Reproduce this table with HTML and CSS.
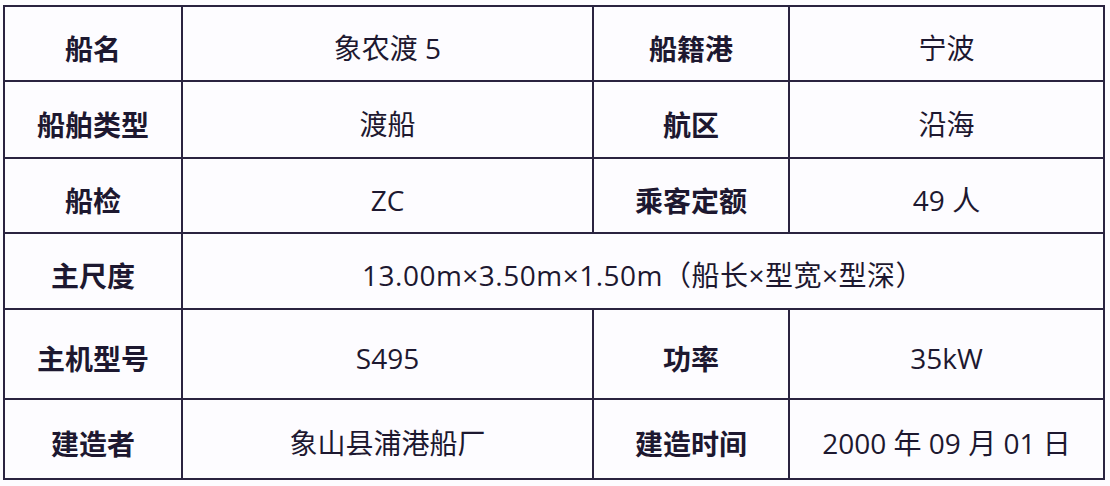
FILE: index.html
```html
<!DOCTYPE html>
<html lang="zh-CN">
<head>
<meta charset="utf-8">
<title>船舶信息</title>
<link rel="stylesheet" href="styles.css">
</head>
<body>
<table class="ship">
  <colgroup>
    <col class="c1"><col class="c2"><col class="c3"><col class="c4">
  </colgroup>
  <tr class="r1">
    <th>船名</th><td>象农渡 5</td><th>船籍港</th><td>宁波</td>
  </tr>
  <tr class="r2">
    <th>船舶类型</th><td>渡船</td><th>航区</th><td>沿海</td>
  </tr>
  <tr class="r3">
    <th>船检</th><td>ZC</td><th>乘客定额</th><td>49 人</td>
  </tr>
  <tr class="r4">
    <th>主尺度</th><td class="dims" colspan="3">13.00m×3.50m×1.50m（船长×型宽×型深）</td>
  </tr>
  <tr class="r5">
    <th>主机型号</th><td>S495</td><th>功率</th><td>35kW</td>
  </tr>
  <tr class="r6">
    <th>建造者</th><td>象山县浦港船厂</td><th>建造时间</th><td>2000 年 09 月 01 日</td>
  </tr>
</table>
</body>
</html>
```

FILE: styles.css
```css
html, body {
  margin: 0;
  padding: 0;
  background: #fdfcff;
}

body {
  padding: 5px 0 0 3px;
}

.ship {
  border-collapse: separate;
  border-spacing: 0;
  table-layout: fixed;
  width: 1102px;
  border-left: 2px solid #2a2340;
  border-top: 2px solid #2a2340;
  font-family: "Noto Sans CJK SC", "Noto Sans", sans-serif;
  font-size: 28px;
  color: #1d1830;
}

.c1 { width: 178px; }
.c2 { width: 411px; }
.c3 { width: 196px; }
.c4 { width: 315px; }

.ship th,
.ship td {
  box-sizing: border-box;
  border-right: 2px solid #2a2340;
  border-bottom: 2px solid #2a2340;
  text-align: center;
  vertical-align: middle;
  padding: 8px 0 0 0;
  line-height: 1;
  white-space: nowrap;
}

.ship th {
  font-weight: 700;
}

.ship td {
  font-family: "Open Sans", "Noto Sans CJK SC", sans-serif;
  font-weight: 400;
}

.ship td.dims {
  letter-spacing: 0.5px;
}

.r1 { height: 75px; }
.r2 { height: 77px; }
.r3 { height: 75px; }
.r4 { height: 76px; }
.r5 { height: 90px; }
.r6 { height: 80px; }
```
